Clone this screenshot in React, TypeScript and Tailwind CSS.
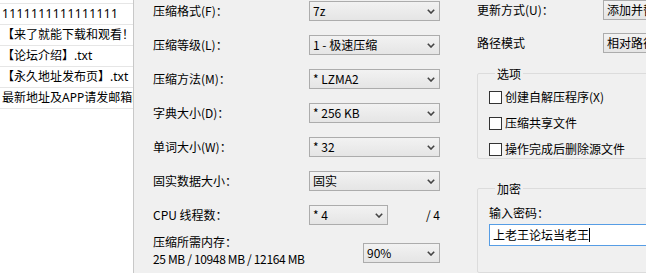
import React from "react";

const font = { fontFamily: '"Noto Sans CJK SC", "Noto Sans", sans-serif' };
const listFont = { fontFamily: '"Noto Sans", "Noto Sans CJK SC", sans-serif' };

function Chevron() {
  return (
    <svg width="8" height="5" viewBox="0 0 8 5" className="shrink-0">
      <polyline points="0.8,0.8 4,4 7.2,0.8" fill="none" stroke="#444" strokeWidth="1.6" />
    </svg>
  );
}

function Combo({ text, w }: { text: string; w: string }) {
  return (
    <div
      className={`${w} h-[20px] shrink-0 flex items-center justify-between border border-[#acacac] bg-gradient-to-b from-[#f2f2f2] to-[#e5e5e5] pl-[3px] pr-[4px] text-[12px] text-black leading-none whitespace-nowrap overflow-hidden`}
    >
      <span>{text}</span>
      <Chevron />
    </div>
  );
}

function Row({ label, combo, w = "w-[131px]", extra }: { label: string; combo: string; w?: string; extra?: React.ReactNode }) {
  return (
    <div className="flex items-center h-[20px]">
      <div className="w-[156px] shrink-0 text-[12px] text-black whitespace-nowrap">{label}</div>
      <Combo text={combo} w={w} />
      {extra}
    </div>
  );
}

function Check({ label }: { label: string }) {
  return (
    <div className="flex items-center h-[16px] gap-[3px]">
      <div className="w-[13px] h-[13px] border border-[#333] bg-white shrink-0" />
      <span className="text-[12px] text-black whitespace-nowrap">{label}</span>
    </div>
  );
}

const files = [
  "【来了就能下载和观看！",
  "【论坛介绍】.txt",
  "【永久地址发布页】.txt",
  "最新地址及APP请发邮箱l",
];

export default function App() {
  return (
    <div className="flex w-[646px] h-[273px] overflow-hidden bg-[#f0f0f0]" style={font}>
      {/* file list */}
      <div className="w-[134px] shrink-0 bg-white border-r border-[#c8c8c8] pt-[3px]" style={listFont}>
        <div className="border-t border-[#e6e6e6]">
          <div className="h-[21px] border-b border-[#e6e6e6] flex items-center pl-[2px] text-[12px] text-black whitespace-nowrap overflow-hidden tracking-[0.4px]">
            1111111111111111
          </div>
          {files.map((f) => (
            <div
              key={f}
              className="h-[21px] border-b border-[#e6e6e6] flex items-center pl-[2px] text-[12px] text-black whitespace-nowrap overflow-hidden"
            >
              {f}
            </div>
          ))}
        </div>
      </div>

      {/* compression settings */}
      <div className="w-[306px] shrink-0 pl-[19px] pt-[1px] flex flex-col gap-[14px]">
        <Row label="压缩格式(F)：" combo="7z" />
        <Row label="压缩等级(L)：" combo="1 - 极速压缩" />
        <Row label="压缩方法(M)：" combo="* LZMA2" />
        <Row label="字典大小(D)：" combo="* 256 KB" />
        <Row label="单词大小(W)：" combo="* 32" />
        <Row label="固实数据大小：" combo="固实" />
        <Row
          label="CPU 线程数："
          combo="* 4"
          w="w-[79px]"
          extra={<div className="flex-1 text-right text-[12px] text-black">/ 4</div>}
        />
        <div className="flex items-start -mt-[6px]">
          <div className="w-[210px] shrink-0 text-[12px] text-black leading-[17px] whitespace-nowrap">
            <div>压缩所需内存：</div>
            <div className="tracking-[-0.35px]">25 MB / 10948 MB / 12164 MB</div>
          </div>
          <div className="mt-[10px]">
            <Combo text="90%" w="w-[77px]" />
          </div>
        </div>
      </div>

      {/* right column */}
      <div className="flex-1 pl-[37px] flex flex-col">
        <div className="flex items-center h-[20px]">
          <div className="w-[126px] shrink-0 text-[12px] text-black whitespace-nowrap">更新方式(U)：</div>
          <Combo text="添加并替换文件" w="w-[120px]" />
        </div>
        <div className="flex items-center h-[20px] mt-[13px]">
          <div className="w-[126px] shrink-0 text-[12px] text-black whitespace-nowrap">路径模式</div>
          <Combo text="相对路径" w="w-[120px]" />
        </div>

        <fieldset className="mt-[12px] w-[220px] h-[101px] border border-[#dcdcdc] rounded-[2px] pl-[11px] pt-[7px]">
          <legend className="ml-[6px] px-[2px] text-[12px] text-black leading-[17px]">选项</legend>
          <div className="flex flex-col gap-[10px]">
            <Check label="创建自解压程序(X)" />
            <Check label="压缩共享文件" />
            <Check label="操作完成后删除源文件" />
          </div>
        </fieldset>

        <fieldset className="mt-[21px] w-[220px] h-[100px] border border-[#dcdcdc] rounded-[2px] pl-[11px] pt-[7px]">
          <legend className="ml-[6px] px-[2px] text-[12px] text-black leading-[17px]">加密</legend>
          <div className="text-[12px] text-black leading-[17px]">输入密码：</div>
          <div className="mt-[3px] h-[22px] border border-[#569de5] bg-white flex items-center pl-[3px] text-[12px] text-black whitespace-nowrap">
            上老王论坛当老王<span className="inline-block w-px h-[14px] bg-black" />
          </div>
        </fieldset>
      </div>
    </div>
  );
}
